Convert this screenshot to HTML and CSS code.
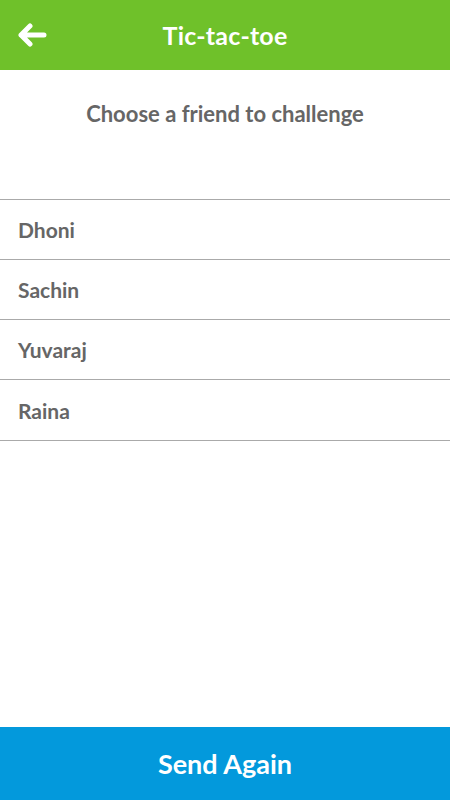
FILE: index.html
```html
<!DOCTYPE html>
<html>
<head>
<meta charset="utf-8">
<link rel="stylesheet" href="styles.css">
</head>
<body>
<div class="app">
  <header class="topbar">
    <button class="back" aria-label="Back">
      <svg width="30" height="24" viewBox="0 0 30 24"><path d="M13 3 L4 12 L13 21 M4 12 H27" fill="none" stroke="#fff" stroke-width="5" stroke-linecap="round" stroke-linejoin="round"/></svg>
    </button>
    <h1 class="title">Tic-tac-toe</h1>
  </header>
  <p class="prompt">Choose a friend to challenge</p>
  <ul class="friends">
    <li class="friend">Dhoni</li>
    <li class="friend">Sachin</li>
    <li class="friend">Yuvaraj</li>
    <li class="friend">Raina</li>
  </ul>
  <div class="spacer"></div>
  <button class="send">Send Again</button>
</div>
</body>
</html>
```
FILE: styles.css
```css
* { box-sizing: border-box; }
html, body { margin: 0; padding: 0; }
body { font-family: "Lato", "Open Sans", sans-serif; background: #fff; }
.app { display: flex; flex-direction: column; height: 800px; width: 450px; }
.topbar { height: 70px; flex: none; background: #6fc12a; display: flex; align-items: center; justify-content: center; position: relative; }
.back { position: absolute; left: 17px; top: 23px; background: none; border: 0; padding: 0; width: 30px; height: 24px; display: flex; }
.title { margin: 0; color: #fff; font-size: 25px; font-weight: 700; letter-spacing: 0.2px; }
.prompt { margin: 0; height: 129px; flex: none; padding-top: 30px; text-align: center; color: #666; font-size: 22px; font-weight: 700; }
.friends { list-style: none; margin: 0; padding: 0; border-top: 1px solid #aaa; }
.friend { height: 60px; border-bottom: 1px solid #aaa; display: flex; align-items: center; padding-left: 18px; color: #666; font-size: 21px; font-weight: 700; }
.friend:last-child { height: 61px; }
.spacer { flex: 1; }
.send { height: 73px; flex: none; background: #0399dc; color: #fff; border: 0; font-family: inherit; font-size: 27px; font-weight: 700; width: 100%; padding: 0; }
```
